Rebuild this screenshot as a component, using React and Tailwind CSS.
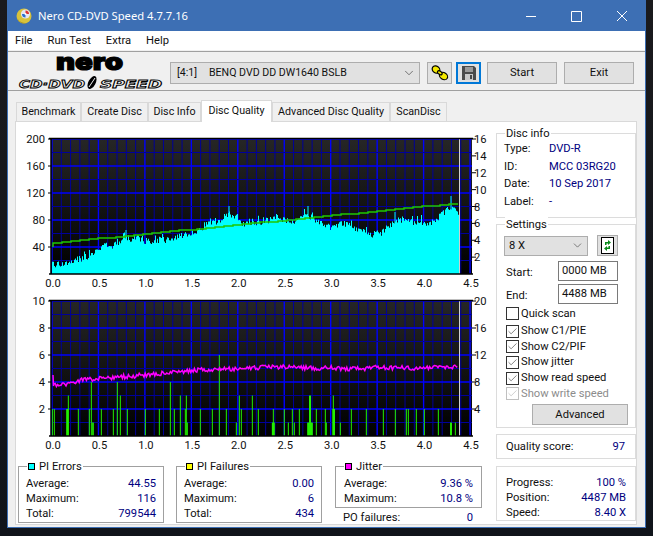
import { Check, ChevronDown } from "lucide-react";

const uiFont = "font-['Roboto','Liberation_Sans',sans-serif]";
const valueColor = "text-[#000080]";

const tabs = [
  { label: "Benchmark", width: "w-[65px]" },
  { label: "Create Disc", width: "w-[67px]" },
  { label: "Disc Info", width: "w-[53px]" },
  { label: "Disc Quality", width: "w-[71px]", active: true },
  { label: "Advanced Disc Quality", width: "w-[118px]" },
  { label: "ScanDisc", width: "w-[57px]" },
];

const piErrors = [
  ["Average:", "44.55"],
  ["Maximum:", "116"],
  ["Total:", "799544"],
];
const piFailures = [
  ["Average:", "0.00"],
  ["Maximum:", "6"],
  ["Total:", "434"],
];
const jitterStats = [
  ["Average:", "9.36 %"],
  ["Maximum:", "10.8 %"],
];
const discInfo = [
  ["Type:", "DVD-R"],
  ["ID:", "MCC 03RG20"],
  ["Date:", "10 Sep 2017"],
  ["Label:", "-"],
];
const progress = [
  ["Progress:", "100 %"],
  ["Position:", "4487 MB"],
  ["Speed:", "8.40 X"],
];
const showChecks = [
  { label: "Show C1/PIE", height: "h-[16px]" },
  { label: "Show C2/PIF", height: "h-[15px]" },
  { label: "Show jitter", height: "h-[16px]" },
  { label: "Show read speed", height: "h-[16px]" },
  { label: "Show write speed", height: "h-[15px]", disabled: true },
];

// chart geometry, in page pixels
const X0 = 52;
const X_STEP = 9.29;
const PLOT_RIGHT = 472;
const END_X = 459.5;
const BAND = 13.5;

const seeded = (seed) => {
  let s = seed;
  return () => {
    s = (s * 16807) % 2147483647;
    return s / 2147483647;
  };
};

const interp = (pts, x) => {
  for (let i = 1; i < pts.length; i++) {
    if (x <= pts[i][0]) {
      const [x1, y1] = pts[i - 1];
      const [x2, y2] = pts[i];
      return y1 + ((y2 - y1) * (x - x1)) / (x2 - x1);
    }
  }
  return pts[pts.length - 1][1];
};

const left = (zx) => zx / 3;
const right = (zx) => 250 + zx / 3;

const cyanEnvelope = [
  ...[[157, 420], [200, 415], [230, 402], [260, 395], [290, 375], [320, 360], [350, 360], [380, 340], [410, 340], [440, 350], [480, 345], [510, 345], [540, 330], [570, 325], [600, 315], [620, 290], [650, 290], [680, 268], [700, 272], [730, 300], [750, 290]].map(([x, y]) => [left(x), 125 + y / 3]),
  ...[[30, 295], [70, 278], [100, 282], [130, 295], [170, 268], [200, 285], [240, 305], [290, 295], [320, 315], [360, 328], [390, 325], [410, 310], [440, 282], [480, 290], [520, 290], [540, 300], [570, 270], [600, 248], [627, 265]].map(([x, y]) => [right(x), 125 + y / 3]),
];

const jitterEnvelope = [
  ...[[157, 290], [170, 285], [210, 280], [240, 270], [300, 265], [400, 258], [480, 250], [600, 240], [750, 235]].map(([x, y]) => [left(x), 290 + y / 3]),
  ...[[40, 232], [120, 230], [200, 235], [240, 232], [280, 236], [340, 238], [380, 232], [500, 235], [590, 232], [622, 230]].map(([x, y]) => [right(x), 290 + y / 3]),
];

const cyanPath = () => {
  const rnd = seeded(4711);
  let d = `M${X0} 274`;
  for (let x = X0 + 1; x < 459; x++) {
    const y = interp(cyanEnvelope, x) + (rnd() - 0.5) * 7 - (rnd() > 0.92 ? 4 : 0);
    d += `V${y.toFixed(1)}H${x + 1}`;
  }
  return `${d}V274Z`;
};

const jitterPoints = () => {
  const rnd = seeded(99);
  const pts = [`${X0 + 1} 375`, `${X0 + 1.5} 386`];
  for (let x = X0 + 2; x < 458; x += 1.2) {
    pts.push(`${x.toFixed(1)} ${(interp(jitterEnvelope, x) + (rnd() - 0.5) * 4.5).toFixed(1)}`);
  }
  return pts.join(" ");
};

const speedPoints = () => {
  const pts = [`${X0 + 1} 247`];
  for (let x = X0 + 1; x < 457; x += 9) {
    const y = Math.round(243 - ((x - X0) / 405) * 40);
    pts.push(`${x} ${y}`, `${x + 9} ${y}`);
  }
  return pts.join(" ");
};

// green PI failure bars: [x, value, width]
const failureBars = [
  ...[[157, 2], [163, 2], [202, 2, 7], [205, 3], [235, 2], [268, 2], [274, 4], [279, 1, 5], [304, 2], [340, 2], [352, 4], [361, 3], [382, 2], [436, 2], [478, 2], [511, 4], [523, 2], [541, 3], [556, 2], [559, 3], [562, 1], [601, 2], [637, 2], [658, 6], [679, 2], [709, 1], [718, 3], [724, 2]].map(([x, v, w = 3]) => [left(x), v, w / 3]),
  ...[[7, 3], [25, 2], [70, 2], [70, 1, 9], [103, 2], [115, 1], [127, 2], [133, 1], [148, 2], [180, 3, 6], [180, 1, 17], [199, 2], [226, 2], [229, 1], [250, 3], [251, 2, 8], [271, 1], [304, 2], [349, 2], [400, 2], [436, 2], [469, 2], [475, 2], [499, 2], [523, 2], [565, 2], [603, 1, 6], [616, 1]].map(([x, v, w = 3]) => [right(x), v, w / 3]),
];

const xLabels = ["0.0", "0.5", "1.0", "1.5", "2.0", "2.5", "3.0", "3.5", "4.0", "4.5"];

const Plot = ({ id, top, leftLabels, rightLabels, children }) => {
  const bottom = top + BAND * 10;
  const verticals = Array.from({ length: 46 }, (_, i) => i);
  const horizontals = Array.from({ length: 10 }, (_, i) => i);

  return (
    <svg
      viewBox={`16 ${top - 17} 480 170`}
      className={`block h-[170px] w-[480px] ${uiFont}`}
      fontSize="11.2"
    >
      <defs>
        <linearGradient id={id} x1="0" y1="0" x2="0" y2="1">
          <stop offset="0" stopColor="#262626" />
          <stop offset="1" stopColor="#000000" />
        </linearGradient>
      </defs>
      <rect x="51" y={top} width={PLOT_RIGHT - 51} height={bottom - top} fill={`url(#${id})`} />
      {verticals.map((i) => (
        <line
          key={i}
          x1={X0 + i * X_STEP}
          x2={X0 + i * X_STEP}
          y1={top}
          y2={bottom}
          stroke={i % 5 === 0 ? "#0000ff" : "#00009a"}
          strokeWidth={i % 5 === 0 ? 1.4 : 1}
        />
      ))}
      {horizontals.map((i) => (
        <line
          key={i}
          x1={X0}
          x2={PLOT_RIGHT}
          y1={top + i * BAND}
          y2={top + i * BAND}
          stroke={i % 2 === 0 ? "#0000ff" : "#00009a"}
          strokeWidth={i % 2 === 0 ? 1.4 : 1}
        />
      ))}
      {children}
      <line x1={END_X} x2={END_X} y1={top} y2={bottom} stroke="#d0d0d0" />
      <path
        d={`M49 ${top - 0.5}H${PLOT_RIGHT + 1}M51 ${top}V${bottom}M49 ${bottom}H${PLOT_RIGHT + 1}`}
        stroke="#000"
        strokeWidth="1.5"
        fill="none"
      />
      {leftLabels.map((label, i) => (
        <g key={label}>
          <line x1="48" x2="51" y1={top + (i * 135) / leftLabels.length} y2={top + (i * 135) / leftLabels.length} stroke="#000" />
          <text x="45" y={top + (i * 135) / leftLabels.length + 4} textAnchor="end" fill="#111">
            {label}
          </text>
        </g>
      ))}
      {rightLabels.map((label, i) => (
        <g key={label}>
          <line x1={PLOT_RIGHT} x2={PLOT_RIGHT + 4} y1={top + (i * 135) / rightLabels.length} y2={top + (i * 135) / rightLabels.length} stroke="#000" />
          <text x={PLOT_RIGHT + 2} y={top + (i * 135) / rightLabels.length + 4} fill="#111">
            {label}
          </text>
        </g>
      ))}
      {xLabels.map((label, i) => (
        <text key={label} x={X0 + i * 46.45 + 1} y={bottom + 13} textAnchor="middle" fill="#111">
          {label}
        </text>
      ))}
    </svg>
  );
};

const GroupBox = ({ title, swatch, className, children, borderClass = "border-[#a0a0a0]" }) => (
  <div className={`relative border ${borderClass} ${className}`}>
    <div className="absolute left-[8px] top-[-8px] flex h-[15px] items-center gap-[4px] bg-white px-[1px] leading-none">
      {swatch && <span className={`h-[7px] w-[7px] border border-black ${swatch}`} />}
      {title}
    </div>
    {children}
  </div>
);

const StatRow = ({ label, value }) => (
  <div className="flex h-[15px] items-center justify-between">
    <span>{label}</span>
    <span className={valueColor}>{value}</span>
  </div>
);

const CheckRow = ({ label, height, checked = true, disabled }) => (
  <div className={`flex items-center gap-[2px] ${height} ${disabled ? "text-[#8c8c8c]" : ""}`}>
    <span
      className={`flex h-[13px] w-[13px] items-center justify-center border bg-white ${
        disabled ? "border-[#c0c0c0] text-[#b0b0b0]" : "border-[#333333] text-[#333333]"
      }`}
    >
      {checked && <Check size={11} strokeWidth={1.3} />}
    </span>
    {label}
  </div>
);

const NeroLogo = () => (
  <svg viewBox="0 -6 152 44" className="-mt-[10px] h-[44px] w-[152px]">
    <text
      x="39"
      y="18"
      fontSize="24"
      fontWeight="900"
      fontFamily="Inter, sans-serif"
      textLength="67"
      lengthAdjust="spacingAndGlyphs"
      stroke="#000"
      strokeWidth="1.200"
    >
      nero
    </text>
    <text
      x="2"
      y="35.500"
      fontSize="10.5"
      fontWeight="700"
      fontStyle="italic"
      fontFamily="'DejaVu Sans', sans-serif"
      textLength="66"
      lengthAdjust="spacingAndGlyphs"
      fill="#f0f0f0"
      stroke="#000"
      strokeWidth="0.8"
    >
      CD·DVD
    </text>
    <ellipse cx="75" cy="30.5" rx="3.6" ry="7" transform="rotate(28 75 30.5)" fill="#000" />
    <path d="M72 35L78 26" stroke="#f0f0f0" strokeWidth="1" />
    <text
      x="83"
      y="35.500"
      fontSize="10.5"
      fontWeight="700"
      fontStyle="italic"
      fontFamily="'DejaVu Sans', sans-serif"
      textLength="62"
      lengthAdjust="spacingAndGlyphs"
      fill="#f0f0f0"
      stroke="#000"
      strokeWidth="0.8"
    >
      SPEED
    </text>
  </svg>
);

const DiscIcon = () => (
  <svg viewBox="0 0 16 16" className="h-[16px] w-[16px]">
    <circle cx="8" cy="8" r="7.5" fill="#d8c23a" />
    <path d="M1 10a7.5 7.5 0 0 0 11 4.5A9 9 0 0 1 1 10z" fill="#a89020" />
    <circle cx="9.5" cy="6" r="4.6" fill="#e6e6f0" />
    <path d="M9.5 2.5a3.5 3.5 0 0 1 3.5 3.5H9.5z" fill="#d33" />
    <path d="M6 6a3.5 3.5 0 0 0 3.5 3.5V6z" fill="#2a6fd0" />
    <circle cx="9.5" cy="6" r="1" fill="#fff" />
  </svg>
);

const LinkIcon = () => (
  <svg viewBox="0 0 18 16" className="h-[16px] w-[18px]">
    <g stroke="#000" strokeWidth="1.2" fill="#f4e800">
      <ellipse cx="5" cy="4.5" rx="4" ry="3.4" transform="rotate(35 5 4.5)" />
      <ellipse cx="12.5" cy="11" rx="4.4" ry="3.4" transform="rotate(35 12.5 11)" />
      <ellipse cx="8.8" cy="7.8" rx="2.6" ry="1.6" transform="rotate(35 8.8 7.8)" />
    </g>
  </svg>
);

const SaveIcon = () => (
  <svg viewBox="0 0 14 14" className="h-[14px] w-[14px]">
    <path d="M0 0H12L14 2V14H0Z" fill="#4a4a4a" />
    <rect x="3" y="1" width="8" height="5" fill="#9a9a9a" />
    <rect x="3" y="8" width="8" height="6" fill="#c8c8c8" />
    <rect x="8" y="9" width="2" height="4" fill="#4a4a4a" />
  </svg>
);

const RefreshIcon = () => (
  <svg viewBox="0 0 13 17" className="h-[17px] w-[13px]">
    <rect x="0.5" y="0.5" width="12" height="16" fill="#fff" stroke="#000" />
    <path d="M4 8V5H7V3L10 5.5L7 8V6.5H5.5V8Z" fill="#0a8a1a" />
    <path d="M9 9V12H6V14L3 11.5L6 9V10.5H7.5V9Z" fill="#0a8a1a" />
  </svg>
);

const App = () => {
  return (
    <div className={`h-[536px] w-[653px] overflow-hidden bg-gradient-to-b from-[#1a1a1d] to-[#10141a] pl-[7px] text-[11.2px] leading-none text-[#111111] ${uiFont}`}>
      <div className="h-[528px] w-[639px] border-x border-b border-[#3d6fb4] bg-[#f0f0f0]">
        <div className="flex h-[31px] items-center bg-[#3d6fb4] pl-[8px] text-white">
          <DiscIcon />
          <span className="ml-[6px] font-['Noto_Sans',sans-serif] text-[11.2px]">Nero CD-DVD Speed 4.7.7.16</span>
          <svg viewBox="0 0 110 14" className="ml-auto mr-[17px] h-[14px] w-[110px]" stroke="#fff" fill="none">
            <path d="M8 7.5H18M53.500 2.500H63.500V12.500H53.500ZM99 2L109 12M109 2L99 12" />
          </svg>
        </div>

        <div className="flex h-[19px] items-center gap-[15px] bg-white pl-[7px]">
          <span>File</span>
          <span>Run Test</span>
          <span>Extra</span>
          <span>Help</span>
        </div>

        <div className="mt-[1px] flex h-[40px] items-center border-y border-[#a0a0a0] pl-[9px] pt-[4px]">
          <NeroLogo />
          <div className="ml-[1px] flex h-[22px] w-[250px] items-center justify-between border border-[#adadad] bg-[#e1e1e1] pl-[6px] pr-[3px] text-[10.6px]">
            <span className="flex">
              <span className="w-[32px]">[4:1]</span>
              BENQ DVD DD DW1640 BSLB
            </span>
            <ChevronDown size={14} strokeWidth={1.2} className="text-[#444444]" />
          </div>
          <button className="ml-[7px] flex h-[22px] w-[25px] items-center justify-center border border-[#adadad] bg-[#e1e1e1]">
            <LinkIcon />
          </button>
          <button className="ml-[4px] flex h-[22px] w-[25px] items-center justify-center border-2 border-[#0078d7] bg-[#e1e1e1]">
            <SaveIcon />
          </button>
          <button className="ml-[6px] h-[22px] w-[70px] border border-[#adadad] bg-[#e1e1e1]">Start</button>
          <button className="ml-[7px] h-[22px] w-[70px] border border-[#adadad] bg-[#e1e1e1]">Exit</button>
        </div>

        <div className="ml-[8px] mt-[9px] flex h-[21px] items-end text-[10.7px]">
          {tabs.map((tab) => (
            <div
              key={tab.label}
              className={`flex items-center justify-center whitespace-nowrap border border-b-0 border-[#d9d9d9] ${tab.width} ${
                tab.active ? "relative z-10 mb-[-1px] h-[22px] bg-white" : "h-[19px] bg-[#f0f0f0]"
              }`}
            >
              {tab.label}
            </div>
          ))}
        </div>

        <div className="ml-[7px] flex h-[404px] w-[622px] border border-[#d9d9d9] bg-white">
          <div className="w-[480px]">
            <Plot
              id="upperPlot"
              top={139}
              leftLabels={["200", "160", "120", "80", "40"]}
              rightLabels={["16", "14", "12", "10", "8", "6", "4", "2"]}
            >
              <path d={cyanPath()} fill="#00ffff" />
              <path d="M126 274V230M229 274V206M308 274V206M395 274V212M451 274V196" stroke="#00ffff" />
              <polyline points={speedPoints()} fill="none" stroke="#1fc800" strokeWidth="1.5" />
            </Plot>
            <div className="mt-[-8px]">
              <Plot
                id="lowerPlot"
                top={301}
                leftLabels={["10", "8", "6", "4", "2"]}
                rightLabels={["20", "16", "12", "8", "4"]}
              >
                {failureBars.map(([x, value, width], i) => (
                  <rect key={i} x={x - width / 2} y={436 - value * BAND} width={width} height={value * BAND} fill="#22f000" />
                ))}
                <polyline points={jitterPoints()} fill="none" stroke="#ff00ff" strokeWidth="1.5" />
              </Plot>
            </div>
            <div className="mt-[12px] flex pl-[2px]">
              <GroupBox title="PI Errors" swatch="bg-[#00ffff]" className="h-[57px] w-[146px] px-[7px] pt-[9px]">
                {piErrors.map(([label, value]) => (
                  <StatRow key={label} label={label} value={value} />
                ))}
              </GroupBox>
              <GroupBox title="PI Failures" swatch="bg-[#ffff00]" className="ml-[12px] h-[57px] w-[146px] px-[7px] pt-[9px]">
                {piFailures.map(([label, value]) => (
                  <StatRow key={label} label={label} value={value} />
                ))}
              </GroupBox>
              <div className="ml-[13px] w-[147px]">
                <GroupBox title="Jitter" swatch="bg-[#ff00ff]" className="h-[42px] px-[8px] pt-[9px]">
                  {jitterStats.map(([label, value]) => (
                    <StatRow key={label} label={label} value={value} />
                  ))}
                </GroupBox>
                <div className="mt-[2px] pl-[8px] pr-[9px]">
                  <StatRow label="PO failures:" value="0" />
                </div>
              </div>
            </div>
          </div>

          <div className="w-[140px] pt-[11px]">
            <GroupBox title="Disc info" borderClass="border-[#dcdcdc]" className="h-[85px] pl-[7px] pt-[6px]">
              {discInfo.map(([label, value]) => (
                <div key={label} className="flex h-[17.6px] items-center">
                  <span className="w-[45px]">{label}</span>
                  <span className={valueColor}>{value}</span>
                </div>
              ))}
            </GroupBox>

            <GroupBox title="Settings" borderClass="border-[#dcdcdc]" className="mt-[6px] h-[204px] pl-[7px] pt-[10px]">
              <div className="flex items-center">
                <div className="flex h-[20px] w-[84px] items-center justify-between border border-[#adadad] bg-[#e1e1e1] pl-[4px] pr-[3px]">
                  8 X
                  <ChevronDown size={13} strokeWidth={1.2} className="text-[#444444]" />
                </div>
                <div className="ml-[9px] flex h-[21px] w-[21px] items-center justify-center border border-[#adadad] bg-[#e1e1e1]">
                  <RefreshIcon />
                </div>
              </div>
              <div className="mt-[5px] flex items-center pl-[2px]">
                <span className="w-[52px] pt-[4px]">Start:</span>
                <div className="flex h-[20px] w-[60px] items-center border border-[#7a7a7a] pl-[3px]">0000 MB</div>
              </div>
              <div className="mt-[3px] flex items-center pl-[2px]">
                <span className="w-[52px] pt-[4px]">End:</span>
                <div className="flex h-[20px] w-[60px] items-center border border-[#7a7a7a] pl-[3px]">4488 MB</div>
              </div>
              <div className="mt-[2px] pl-[2px]">
                <CheckRow label="Quick scan" height="h-[15px]" checked={false} />
              </div>
              <div className="mt-[2px] pl-[2px]">
                {showChecks.map((item) => (
                  <CheckRow key={item.label} {...item} />
                ))}
              </div>
              <div className="ml-[28px] mt-[3px] flex h-[21px] w-[96px] items-center justify-center border border-[#adadad] bg-[#e1e1e1]">
                Advanced
              </div>
            </GroupBox>

            <div className="mt-[6px] flex h-[25px] items-center justify-between border border-[#dcdcdc] pl-[9px] pr-[10px]">
              <span>Quality score:</span>
              <span className={valueColor}>97</span>
            </div>

            <div className="mt-[7px] h-[55px] border border-[#dcdcdc] pl-[9px] pr-[9px] pt-[8px]">
              {progress.map(([label, value]) => (
                <StatRow key={label} label={label} value={value} />
              ))}
            </div>
          </div>
        </div>
      </div>
    </div>
  );
};

export default App;
